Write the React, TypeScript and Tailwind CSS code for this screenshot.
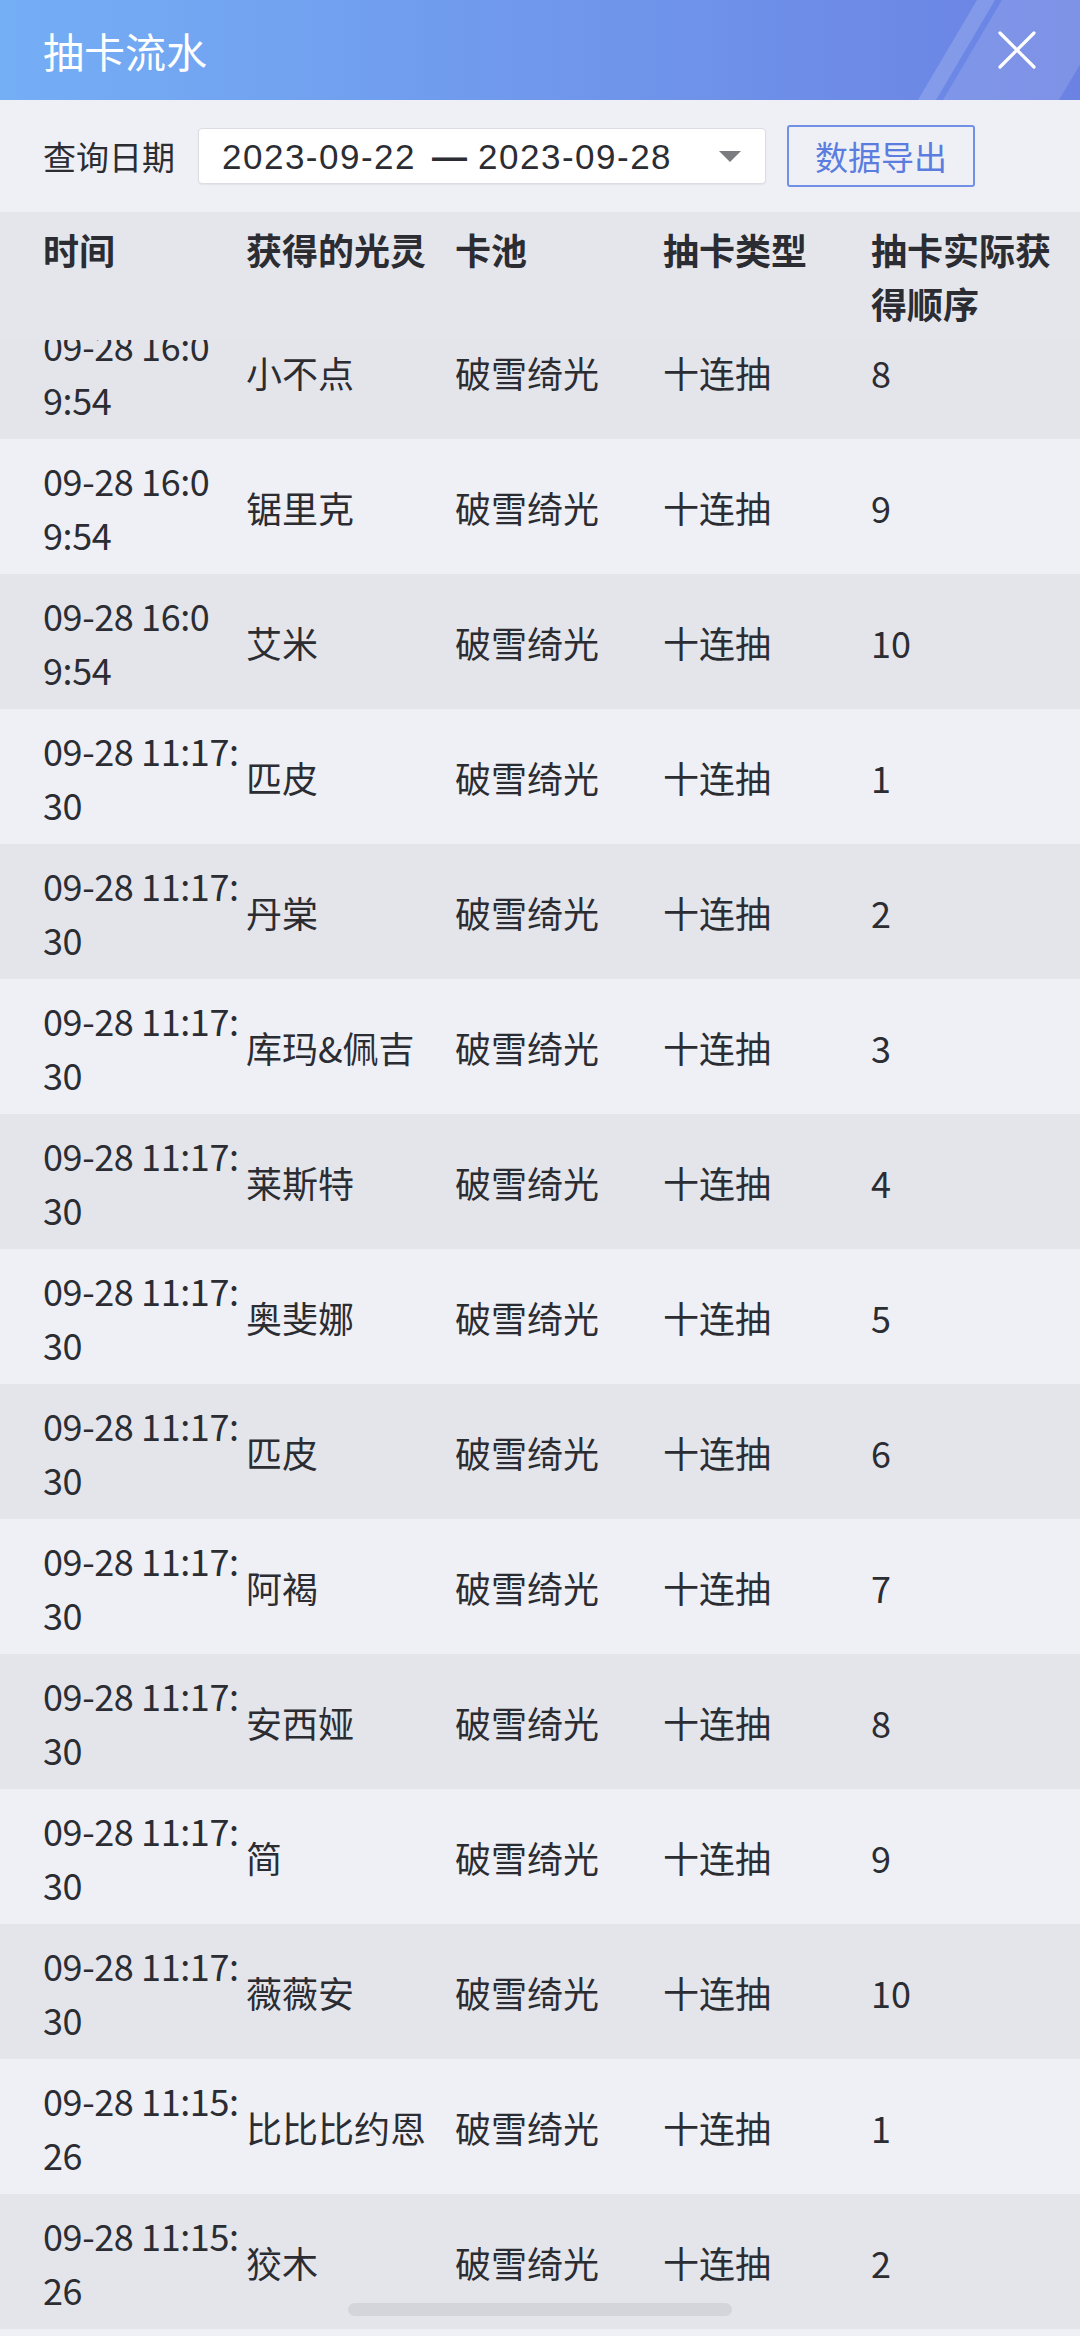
import React from "react";

type Row = { t1: string; t2: string; name: string; order: string };

const rows: Row[] = [
  { t1: "09-28 16:0", t2: "9:54", name: "小不点", order: "8" },
  { t1: "09-28 16:0", t2: "9:54", name: "锯里克", order: "9" },
  { t1: "09-28 16:0", t2: "9:54", name: "艾米", order: "10" },
  { t1: "09-28 11:17:", t2: "30", name: "匹皮", order: "1" },
  { t1: "09-28 11:17:", t2: "30", name: "丹棠", order: "2" },
  { t1: "09-28 11:17:", t2: "30", name: "库玛&佩吉", order: "3" },
  { t1: "09-28 11:17:", t2: "30", name: "莱斯特", order: "4" },
  { t1: "09-28 11:17:", t2: "30", name: "奥斐娜", order: "5" },
  { t1: "09-28 11:17:", t2: "30", name: "匹皮", order: "6" },
  { t1: "09-28 11:17:", t2: "30", name: "阿褐", order: "7" },
  { t1: "09-28 11:17:", t2: "30", name: "安西娅", order: "8" },
  { t1: "09-28 11:17:", t2: "30", name: "简", order: "9" },
  { t1: "09-28 11:17:", t2: "30", name: "薇薇安", order: "10" },
  { t1: "09-28 11:15:", t2: "26", name: "比比比约恩", order: "1" },
  { t1: "09-28 11:15:", t2: "26", name: "狡木", order: "2" },
];

export default function App() {
  return (
    <div className="relative w-[1080px] h-[2336px] overflow-hidden bg-[#eff0f5] text-[#2b2d33] font-['Noto_Sans_CJK_SC','Noto_Sans',sans-serif] flex flex-col">
      {/* Title bar */}
      <header className="relative h-[100px] shrink-0 overflow-hidden bg-gradient-to-r from-[#74aef5] to-[#6b82e3] flex items-center pl-[43px] pr-[44px]">
        <svg
          className="absolute right-0 top-0"
          width="220"
          height="100"
          viewBox="860 0 220 100"
        >
          <polygon points="977,0 995,0 936,100 918,100" fill="#ffffff" fillOpacity="0.16" />
          <polygon points="1002,0 1118,0 1059,100 943,100" fill="#ffffff" fillOpacity="0.13" />
        </svg>
        <h1 className="relative text-[41px] leading-none text-white font-normal">抽卡流水</h1>
        <button className="relative ml-auto w-[38px] h-[38px] flex items-center justify-center">
          <svg width="38" height="38" viewBox="0 0 38 38">
            <path d="M2 2 L36 36 M36 2 L2 36" stroke="#ffffff" strokeWidth="3.2" strokeLinecap="round" />
          </svg>
        </button>
      </header>

      {/* Filter bar */}
      <div className="h-[112px] shrink-0 flex items-center pl-[43px]">
        <span className="text-[33px] leading-none text-[#2b2d33]">查询日期</span>
        <div className="ml-[23px] w-[568px] h-[56px] bg-white border border-[#dcdde3] rounded-[4px] shadow-[0_1px_2px_rgba(0,0,0,0.06)] flex items-center justify-between pl-[23px] pr-[24px]">
          <span className="flex items-center text-[35px] leading-none text-[#2b2d33] whitespace-nowrap font-['Liberation_Sans','Noto_Sans_CJK_SC',sans-serif] tracking-[1.5px]">
            <span>2023-09-22</span>
            <span className="ml-[16px] mr-[11px] font-bold tracking-normal">—</span>
            <span>2023-09-28</span>
          </span>
          <svg width="22" height="11" viewBox="0 0 22 11">
            <polygon points="0,0 22,0 11,11" fill="#7b7c80" />
          </svg>
        </div>
        <button className="ml-[21px] w-[188px] h-[62px] border-2 border-[#7190e6] rounded-[3px] text-[33px] leading-none text-[#5b7de0] flex items-center justify-center">
          数据导出
        </button>
      </div>

      {/* Table header */}
      <div className="h-[128px] shrink-0 bg-[#e5e6ec] grid grid-cols-[246px_209px_208px_208px_1fr] pt-[10px] text-[36px] leading-[54px] font-bold text-[#2b2d33] relative z-10">
        <div className="pl-[43px]">时间</div>
        <div className="whitespace-nowrap">获得的光灵</div>
        <div>卡池</div>
        <div>抽卡类型</div>
        <div>
          抽卡实际获
          <br />
          得顺序
        </div>
      </div>

      {/* Table body */}
      <div className="flex-1 overflow-hidden">
        <div className="-mt-[36px]">
          {rows.map((r, i) => (
            <div
              key={i}
              className={`h-[135px] grid grid-cols-[246px_209px_208px_208px_1fr] items-center text-[36px] leading-[54px] text-[#2b2d33] ${
                i % 2 === 0 ? "bg-[#e4e5eb]" : "bg-[#eff0f6]"
              }`}
            >
              <div className="pl-[43px] whitespace-nowrap tracking-[-0.4px]">
                {r.t1}
                <br />
                {r.t2}
              </div>
              <div className="whitespace-nowrap">{r.name}</div>
              <div>破雪绮光</div>
              <div>十连抽</div>
              <div>{r.order}</div>
            </div>
          ))}
        </div>
      </div>

      {/* horizontal scroll indicator */}
      <div className="absolute left-[348px] bottom-[20px] w-[384px] h-[13px] rounded-full bg-[#d4d5db]" />
    </div>
  );
}
